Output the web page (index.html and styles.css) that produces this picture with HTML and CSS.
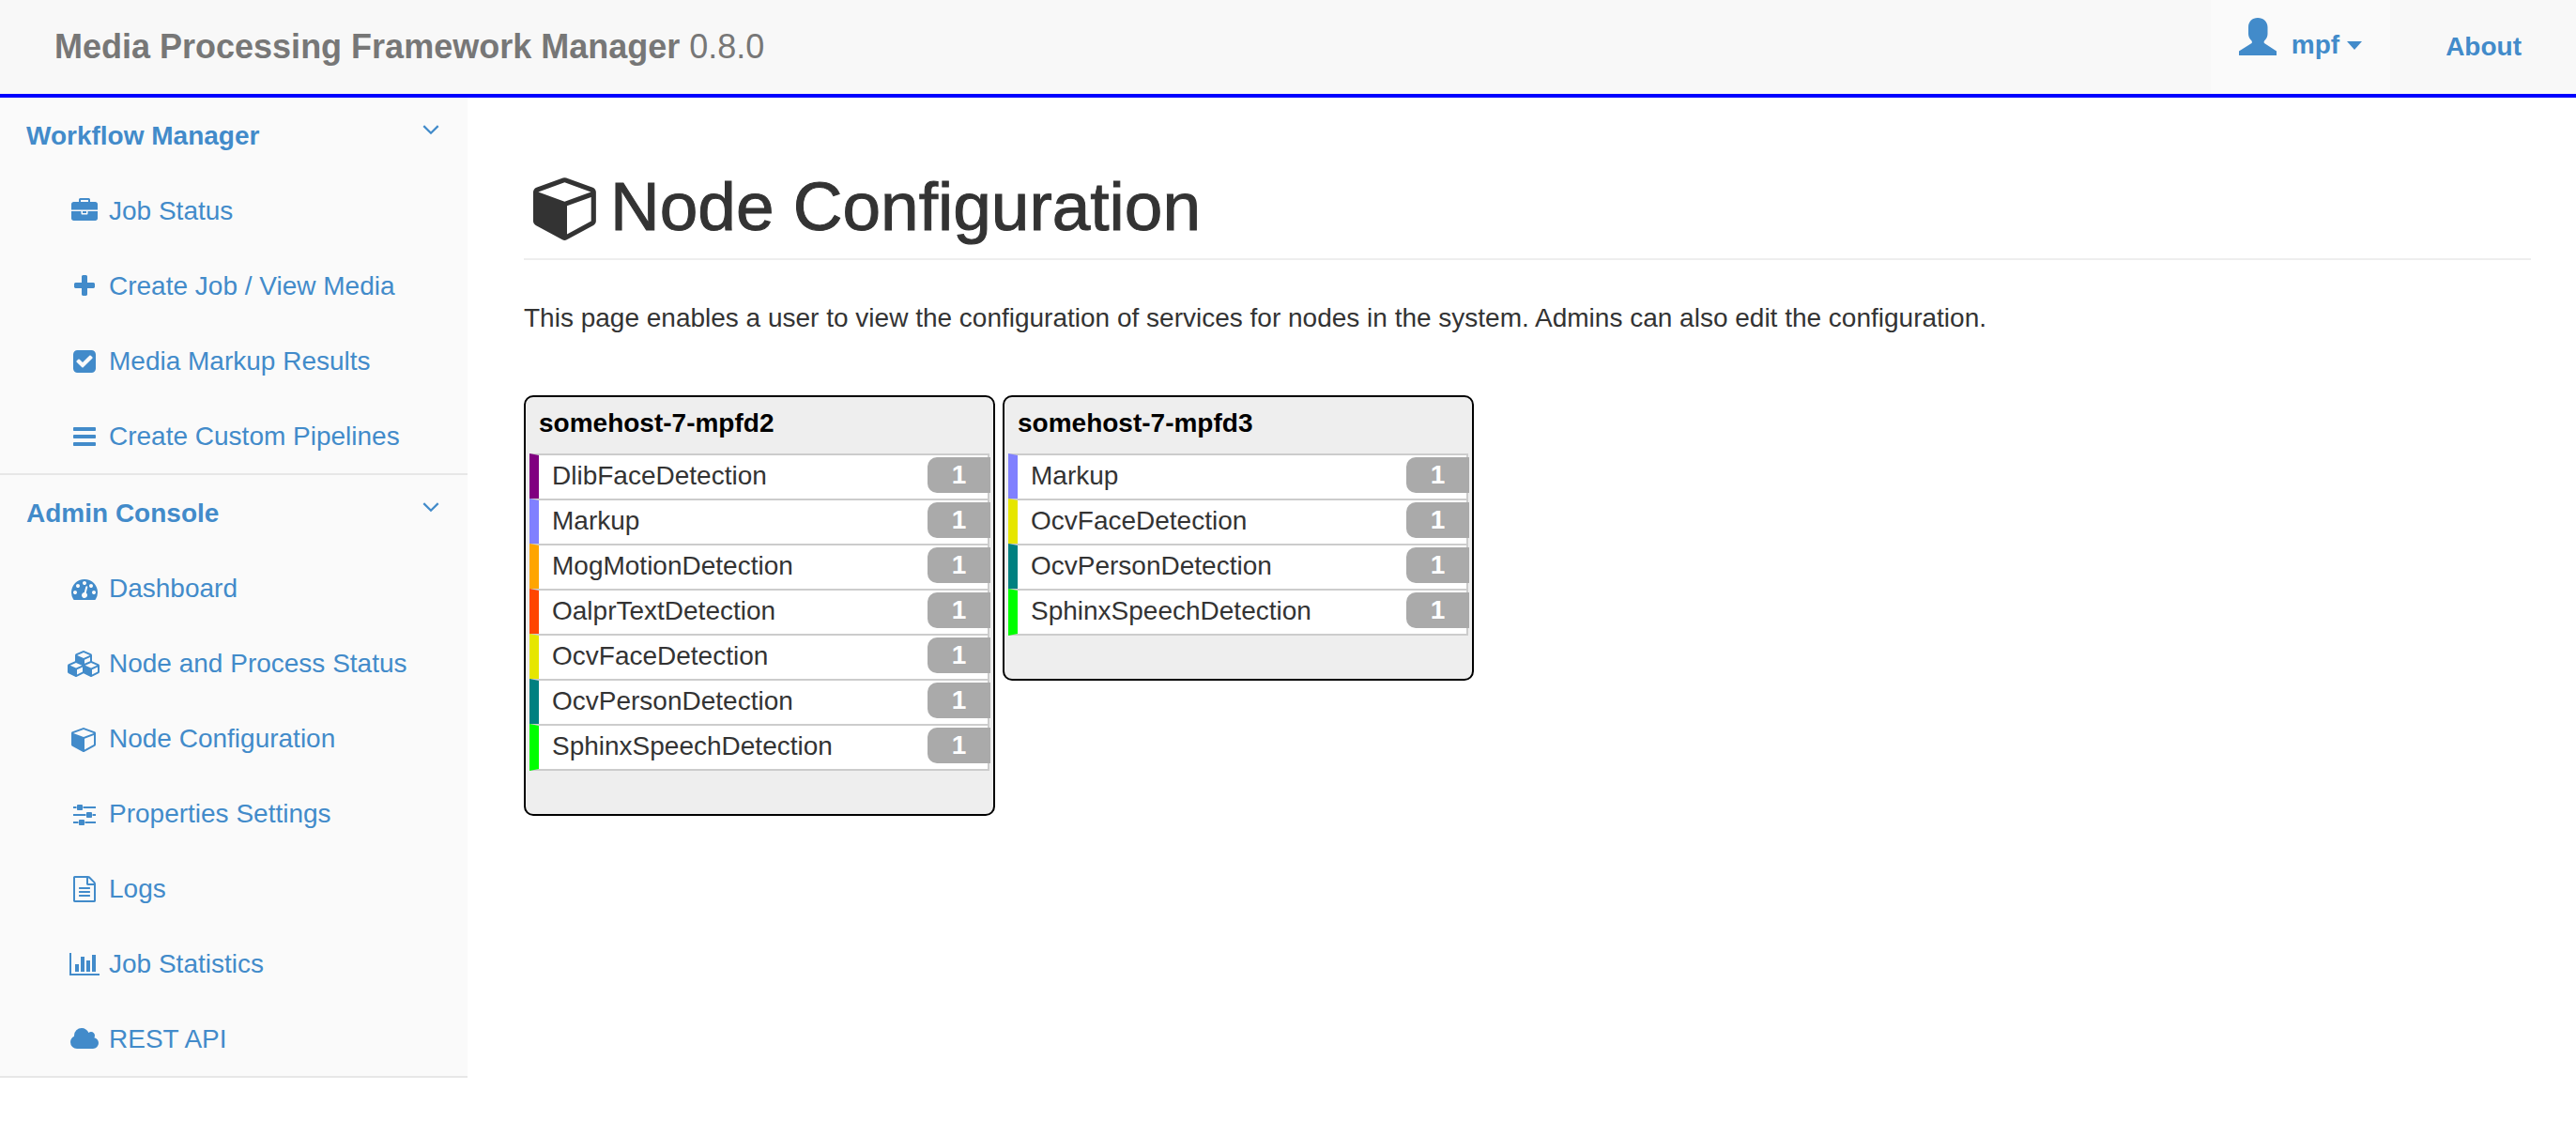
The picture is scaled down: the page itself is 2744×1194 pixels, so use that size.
FILE: index.html
```html
<!DOCTYPE html>
<html lang="en">
<head>
<meta charset="utf-8">
<meta name="viewport" content="width=device-width, initial-scale=1">
<title>Media Processing Framework Manager</title>
<link rel="stylesheet" href="styles.css">
</head>
<body>
<header class="navbar">
  <div class="brand"><strong>Media Processing Framework Manager</strong> 0.8.0</div>
  <nav class="navbar-links" aria-label="Account">
    <button type="button" class="user-menu" aria-haspopup="true">
      <svg class="user-icon" viewBox="0 0 40 40" aria-hidden="true"><path d="M0 40v-4.500L13.500 27q1-1 0-2.500Q10 21 10 17V10C10 4 14 0 20 0s10.500 4 10.500 10v7q0 4-3.500 7.500-1 1.500 0 2.500L40 35.500V40z"/></svg>
      <span>mpf</span>
      <span class="caret"></span>
    </button>
    <a class="about-link" href="#about">About</a>
  </nav>
</header>
<div class="layout">
  <aside class="sidebar">
    <section class="menu">
      <button type="button" class="menu-heading" aria-expanded="true">Workflow Manager
        <svg class="chevron" viewBox="0 0 16 10" aria-hidden="true"><path d="M1 1l7 7 7-7"/></svg>
      </button>
      <ul class="menu-list">
        <li><a href="#jobs"><svg class="icon" viewBox="0 0 1792 1792" aria-hidden="true"><path d="M640 256h512v-128h-512v128zm1152 640v480q0 66-47 113t-113 47h-1472q-66 0-113-47t-47-113v-480h672v160q0 26 19 45t45 19h320q26 0 45-19t19-45v-160h672zm-768 0v128h-256v-128h256zm768-480v384h-1792v-384q0-66 47-113t113-47h352v-160q0-40 28-68t68-28h576q40 0 68 28t28 68v160h352q66 0 113 47t47 113z"/></svg>Job Status</a></li>
        <li><a href="#create"><svg class="icon" viewBox="0 0 1792 1792" aria-hidden="true"><path d="M1600 736v192q0 40-28 68t-68 28h-416v416q0 40-28 68t-68 28h-192q-40 0-68-28t-28-68v-416h-416q-40 0-68-28t-28-68v-192q0-40 28-68t68-28h416v-416q0-40 28-68t68-28h192q40 0 68 28t28 68v416h416q40 0 68 28t28 68z"/></svg>Create Job / View Media</a></li>
        <li><a href="#markup"><svg class="icon" viewBox="0 0 1792 1792" aria-hidden="true"><path d="M813 1299l614-614q19-19 19-45t-19-45l-102-102q-19-19-45-19t-45 19l-467 467-211-211q-19-19-45-19t-45 19l-102 102q-19 19-19 45t19 45l358 358q19 19 45 19t45-19zm851-883v960q0 119-84.500 203.500t-203.500 84.500h-960q-119 0-203.500-84.500t-84.500-203.500v-960q0-119 84.500-203.500t203.500-84.500h960q119 0 203.500 84.500t84.500 203.500z"/></svg>Media Markup Results</a></li>
        <li><a href="#pipelines"><svg class="icon" viewBox="0 0 1792 1792" aria-hidden="true"><path d="M1664 1344v128q0 26-19 45t-45 19h-1408q-26 0-45-19t-19-45v-128q0-26 19-45t45-19h1408q26 0 45 19t19 45zm0-512v128q0 26-19 45t-45 19h-1408q-26 0-45-19t-19-45v-128q0-26 19-45t45-19h1408q26 0 45 19t19 45zm0-512v128q0 26-19 45t-45 19h-1408q-26 0-45-19t-19-45v-128q0-26 19-45t45-19h1408q26 0 45 19t19 45z"/></svg>Create Custom Pipelines</a></li>
      </ul>
    </section>
    <section class="menu">
      <button type="button" class="menu-heading" aria-expanded="true">Admin Console
        <svg class="chevron" viewBox="0 0 16 10" aria-hidden="true"><path d="M1 1l7 7 7-7"/></svg>
      </button>
      <ul class="menu-list">
        <li><a href="#dashboard"><svg class="icon" viewBox="0 0 1792 1792" aria-hidden="true"><path d="M384 1152q0-53-37.500-90.500t-90.500-37.500-90.500 37.500-37.500 90.500 37.500 90.500 90.500 37.500 90.500-37.500 37.500-90.500zm192-448q0-53-37.500-90.500t-90.500-37.500-90.500 37.500-37.500 90.500 37.500 90.500 90.500 37.500 90.500-37.500 37.500-90.500zm428 481l101-382q6-26-7.500-48.500t-38.500-29.500-48 6.500-30 39.500l-101 382q-60 5-107 43.500t-63 98.500q-20 77 20 146t117 89 146-20 89-117q16-60-6-117t-72-91zm660-33q0-53-37.500-90.500t-90.500-37.500-90.500 37.500-37.500 90.500 37.500 90.500 90.500 37.500 90.500-37.500 37.500-90.500zm-640-640q0-53-37.500-90.500t-90.500-37.500-90.500 37.500-37.500 90.500 37.500 90.500 90.500 37.500 90.500-37.500 37.500-90.500zm448 192q0-53-37.500-90.500t-90.500-37.500-90.500 37.500-37.500 90.500 37.500 90.500 90.500 37.500 90.500-37.500 37.500-90.500zm320 448q0 261-141 483-19 29-54 29h-1402q-35 0-54-29-141-221-141-483 0-182 71-348t191-286 286-191 348-71 348 71 286 191 191 286 71 348z"/></svg>Dashboard</a></li>
        <li><a href="#nodes"><svg class="icon" viewBox="0 0 2304 1792" aria-hidden="true"><path d="M640 1632l384-192v-314l-384 164v342zm-64-454l404-173-404-173-404 173zm1088 454l384-192v-314l-384 164v342zm-64-454l404-173-404-173-404 173zm-448-293l384-165v-266l-384 164v267zm-64-379l441-189-441-189-441 189zm1088 518v416q0 36-19 67t-52 47l-448 224q-25 14-57 14t-57-14l-448-224q-4-2-7-4-2 2-7 4l-448 224q-25 14-57 14t-57-14l-448-224q-33-16-52-47t-19-67v-416q0-38 21.500-70t56.500-48l434-186v-400q0-38 21.500-70t56.500-48l448-192q23-10 50-10t50 10l448 192q35 16 56.500 48t21.500 70v400l434 186q36 16 57 48t21 70z"/></svg>Node and Process Status</a></li>
        <li><a href="#node-configuration"><svg class="icon" viewBox="0 0 1792 1792" aria-hidden="true"><path d="M896 1629l640-349v-636l-640 233v752zm-64-865l698-254-698-254-698 254zm832-252v768q0 35-18 65t-49 47l-704 384q-28 16-61 16t-61-16l-704-384q-31-17-49-47t-18-65v-768q0-40 23-73t61-47l704-256q22-8 44-8t44 8l704 256q38 14 61 47t23 73z"/></svg>Node Configuration</a></li>
        <li><a href="#properties"><svg class="icon" viewBox="0 0 1792 1792" aria-hidden="true"><path d="M480 1408v128h-352v-128h352zm352-128q26 0 45 19t19 45v256q0 26-19 45t-45 19h-256q-26 0-45-19t-19-45v-256q0-26 19-45t45-19h256zm160-384v128h-864v-128h864zm-640-512v128h-224v-128h224zm1312 1024v128h-736v-128h736zm-960-1152q26 0 45 19t19 45v256q0 26-19 45t-45 19h-256q-26 0-45-19t-19-45v-256q0-26 19-45t45-19h256zm640 512q26 0 45 19t19 45v256q0 26-19 45t-45 19h-256q-26 0-45-19t-19-45v-256q0-26 19-45t45-19h256zm320 128v128h-224v-128h224zm0-512v128h-864v-128h864z"/></svg>Properties Settings</a></li>
        <li><a href="#logs"><svg class="icon" viewBox="0 0 1792 1792" aria-hidden="true"><path d="M1596 380q28 28 48 76t20 88v1152q0 40-28 68t-68 28h-1344q-40 0-68-28t-28-68v-1600q0-40 28-68t68-28h896q40 0 88 20t76 48zm-444-244v376h376q-10-29-22-41l-313-313q-12-12-41-22zm384 1528v-1024h-416q-40 0-68-28t-28-68v-416h-768v1536h1280zm-1024-864q0-14 9-23t23-9h704q14 0 23 9t9 23v64q0 14-9 23t-23 9h-704q-14 0-23-9t-9-23v-64zm736 224q14 0 23 9t9 23v64q0 14-9 23t-23 9h-704q-14 0-23-9t-9-23v-64q0-14 9-23t23-9h704zm0 256q14 0 23 9t9 23v64q0 14-9 23t-23 9h-704q-14 0-23-9t-9-23v-64q0-14 9-23t23-9h704z"/></svg>Logs</a></li>
        <li><a href="#statistics"><svg class="icon" viewBox="0 0 2048 1792" aria-hidden="true"><path d="M640 896v512h-256v-512h256zm384-512v1024h-256v-1024h256zm1024 1152v128h-2048v-1536h128v1408h1920zm-640-896v768h-256v-768h256zm384-384v1152h-256v-1152h256z"/></svg>Job Statistics</a></li>
        <li><a href="#rest"><svg class="icon" viewBox="0 0 2048 1792" aria-hidden="true"><path d="M1984 1152q0 159-112.500 271.500t-271.500 112.500h-1088q-185 0-316.500-131.500t-131.500-316.500q0-132 71-241.500t187-163.500q-2-28-2-43 0-212 150-362t362-150q158 0 286.500 88t187.500 230q70-62 166-62 106 0 181 75t75 181q0 75-41 138 129 30 213 134.500t84 239.500z"/></svg>REST API</a></li>
      </ul>
    </section>
  </aside>
  <main class="content">
    <h1 class="page-title"><svg class="title-icon" viewBox="0 0 1792 1792" aria-hidden="true"><path d="M896 1629l640-349v-636l-640 233v752zm-64-865l698-254-698-254-698 254zm832-252v768q0 35-18 65t-49 47l-704 384q-28 16-61 16t-61-16l-704-384q-31-17-49-47t-18-65v-768q0-40 23-73t61-47l704-256q22-8 44-8t44 8l704 256q38 14 61 47t23 73z"/></svg>Node Configuration</h1>
    <p class="intro">This page enables a user to view the configuration of services for nodes in the system. Admins can also edit the configuration.</p>
    <div class="nodes">
      <section class="node">
        <h2 class="node-name">somehost-7-mpfd2</h2>
        <ul class="services">
          <li class="service dlib">DlibFaceDetection<span class="count">1</span></li>
          <li class="service markup">Markup<span class="count">1</span></li>
          <li class="service mog">MogMotionDetection<span class="count">1</span></li>
          <li class="service oalpr">OalprTextDetection<span class="count">1</span></li>
          <li class="service ocv-face">OcvFaceDetection<span class="count">1</span></li>
          <li class="service ocv-person">OcvPersonDetection<span class="count">1</span></li>
          <li class="service sphinx">SphinxSpeechDetection<span class="count">1</span></li>
        </ul>
      </section>
      <section class="node">
        <h2 class="node-name">somehost-7-mpfd3</h2>
        <ul class="services">
          <li class="service markup">Markup<span class="count">1</span></li>
          <li class="service ocv-face">OcvFaceDetection<span class="count">1</span></li>
          <li class="service ocv-person">OcvPersonDetection<span class="count">1</span></li>
          <li class="service sphinx">SphinxSpeechDetection<span class="count">1</span></li>
        </ul>
      </section>
    </div>
  </main>
</div>
</body>
</html>
```
FILE: styles.css
```css
* {
  box-sizing: border-box;
}

body {
  margin: 0;
  background: #fff;
  color: #333;
  font: 28px/40px "Liberation Sans", Arial, sans-serif;
}

a {
  color: #428bca;
  text-decoration: none;
}

button {
  border: 0;
  background: none;
  color: #428bca;
  font: inherit;
  font-weight: bold;
  cursor: pointer;
}

ul {
  margin: 0;
  padding: 0;
  list-style: none;
}

svg {
  flex: none;
  fill: currentColor;
}

/* Top bar */
.navbar {
  display: flex;
  justify-content: space-between;
  min-height: 104px;
  border-bottom: 4px solid #00f;
  background: #f8f8f8;
}

.brand {
  padding: 30px 0 30px 58px;
  color: #777;
  font-size: 36px;
}

.navbar-links {
  display: flex;
  align-items: stretch;
}

.user-menu {
  display: flex;
  align-items: center;
  padding: 0 30px 4px;
  background: #fafafa;
}

.user-icon {
  width: 40px;
  height: 40px;
  margin: 0 16px 18px 0;
}

.caret {
  margin: 0 0 0 8px;
  border: 8px solid transparent;
  border-top: 9px solid;
  border-bottom: 0;
}

.about-link {
  padding: 30px 58px 30px 59px;
  font-weight: bold;
}

/* Side menu */
.layout {
  display: flex;
  align-items: flex-start;
}

.sidebar {
  flex: 0 0 498px;
  background: #fafafa;
}

.menu {
  border-bottom: 2px solid #e7e7e7;
}

.menu-heading {
  display: flex;
  justify-content: space-between;
  width: 100%;
  padding: 21px 30px 19px 28px;
  text-align: left;
}

.chevron {
  width: 18px;
  height: 11px;
  margin-top: 8px;
  fill: none;
  stroke: currentColor;
  stroke-width: 2;
}

.menu-list a {
  display: flex;
  align-items: center;
  gap: 8px;
  padding: 21px 0 19px 72px;
}

.icon {
  width: 36px;
  height: 28px;
}

/* Page body */
.content {
  flex: 1;
  min-width: 0;
  padding: 76px 48px 48px 60px;
}

.page-title {
  display: flex;
  align-items: center;
  margin: 0;
  padding-bottom: 15px;
  border-bottom: 2px solid #eee;
  font-size: 73px;
  font-weight: 500;
  line-height: 80px;
  -webkit-text-stroke: 1px currentColor;
}

.title-icon {
  width: 72px;
  height: 72px;
  margin: 0 10px;
}

.intro {
  margin: 42px 0 62px;
}

.nodes {
  display: flex;
  flex-wrap: wrap;
  align-items: flex-start;
  gap: 8px;
}

.node {
  width: 502px;
  padding: 8px 4px 46px;
  border: 2px solid #000;
  border-radius: 10px;
  background: #eee;
}

.node-name {
  margin: 0;
  padding: 0 10px 12px;
  color: #000;
  font-size: 28px;
  line-height: 40px;
}

.service {
  display: flex;
  justify-content: space-between;
  height: 48px;
  padding: 2px 0 0 14px;
  border: 2px solid #ccc;
  border-bottom: 0;
  border-left: 10px solid;
  background: #fff;
}

.service:last-child {
  height: 50px;
  border-bottom: 2px solid #ccc;
}

.count {
  width: 67px;
  height: 38px;
  margin-right: -3px;
  border-radius: 10px 0 0 10px;
  background: #aaa;
  color: #fff;
  font-weight: bold;
  line-height: 38px;
  text-align: center;
}

.dlib { border-left-color: #800080; }
.markup { border-left-color: #8080ff; }
.mog { border-left-color: #ffa500; }
.oalpr { border-left-color: #ff4500; }
.ocv-face { border-left-color: #e6e600; }
.ocv-person { border-left-color: #008080; }
.sphinx { border-left-color: #0f0; }
```
